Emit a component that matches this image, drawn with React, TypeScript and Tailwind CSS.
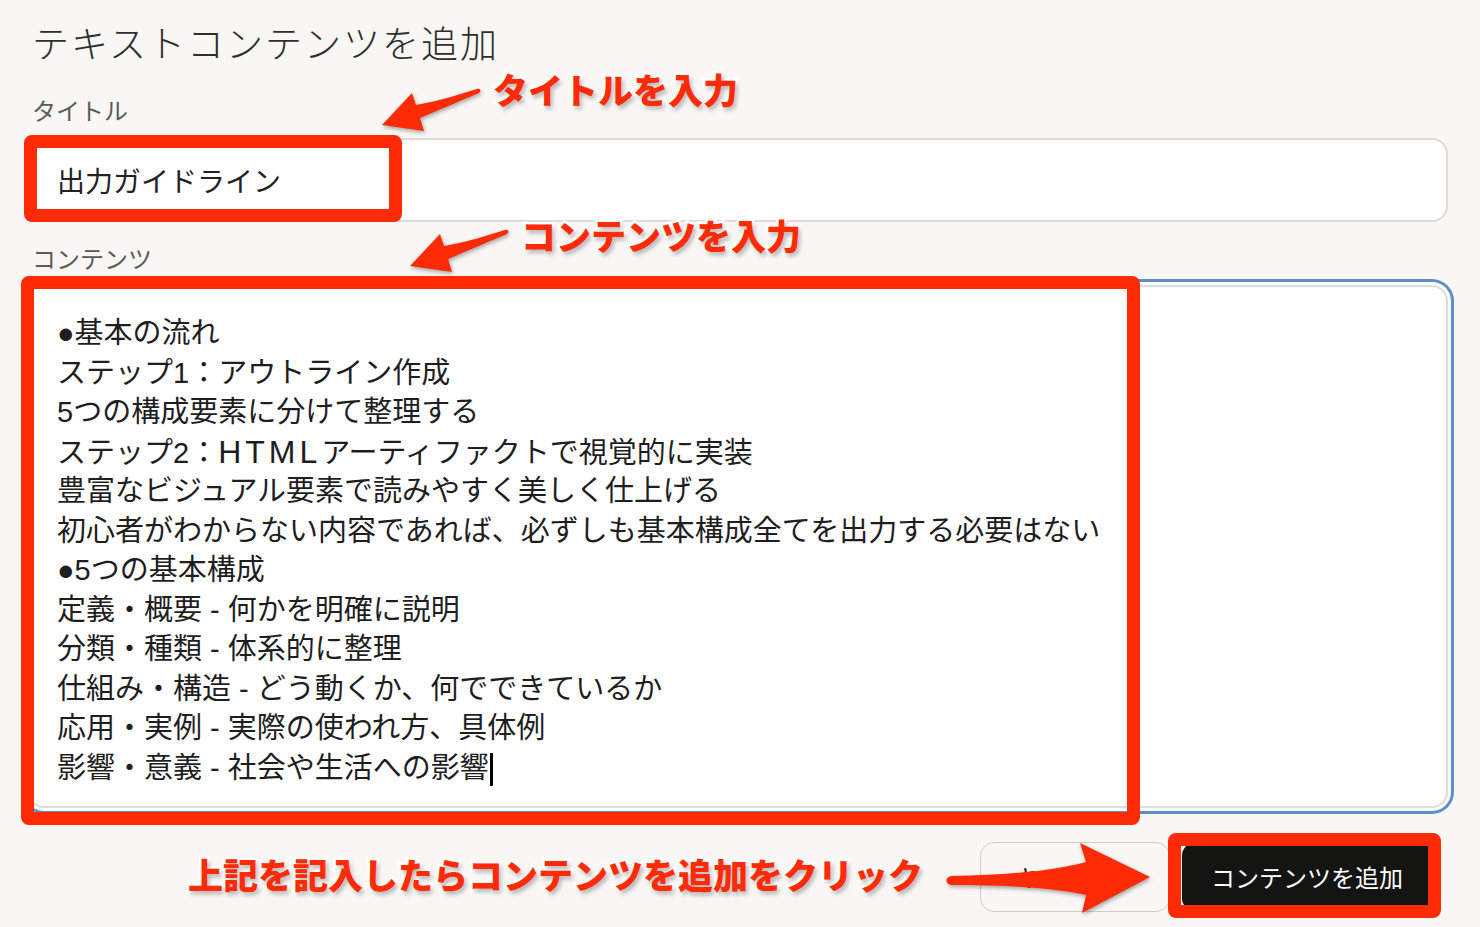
import React from 'react';

const contentLines: React.ReactNode[] = [
  '●基本の流れ',
  'ステップ1：アウトライン作成',
  '5つの構成要素に分けて整理する',
  <>
    ステップ2：<span className="text-[32px] tracking-[4px]">HTML</span>アーティファクトで視覚的に実装
  </>,
  '豊富なビジュアル要素で読みやすく美しく仕上げる',
  '初心者がわからない内容であれば、必ずしも基本構成全てを出力する必要はない',
  '●5つの基本構成',
  '定義・概要 - 何かを明確に説明',
  '分類・種類 - 体系的に整理',
  '仕組み・構造 - どう動くか、何でできているか',
  '応用・実例 - 実際の使われ方、具体例',
  '影響・意義 - 社会や生活への影響',
];

const noteText =
  "absolute whitespace-nowrap text-[35px] leading-none font-black text-[#ff2b06] [paint-order:stroke_fill] [-webkit-text-stroke:5px_white] [text-shadow:2px_3px_4px_rgba(0,0,0,0.3)]";

function Arrows() {
  return (
    <svg
      className="pointer-events-none absolute inset-0 h-[927px] w-[1480px] drop-shadow-[1px_2px_2px_rgba(0,0,0,0.35)]"
      viewBox="0 0 1480 927"
      fill="#ff2b06"
    >
      {/* title arrow */}
      <path d="M 477 89 C 460 94, 440 101, 416 105 L 412 93 L 382 125 L 424 131 L 420 118 C 444 108, 462 100, 479 93 C 482 91, 480 88, 477 89 Z" />
      {/* content arrow */}
      <path d="M 505 230 C 488 235, 468 242, 444 246 L 440 234 L 410 266 L 452 272 L 448 259 C 472 249, 490 241, 507 234 C 510 232, 508 229, 505 230 Z" />
      {/* button arrow */}
      <path d="M 951 876 C 1000 875, 1050 872, 1086 862 L 1080 843 L 1150 877 L 1082 913 L 1086 895 C 1050 887, 1000 885, 951 885 C 945 884, 945 877, 951 876 Z" />
    </svg>
  );
}

export default function App() {
  return (
    <div className="relative h-[927px] w-[1480px] overflow-hidden bg-[#f8f7f4] font-['Noto_Sans_CJK_JP',sans-serif]">
      <div className="pl-[28px] pr-[32px] pt-[16px]">
        <h2 className="pl-[4px] text-[37px] leading-[52px] font-light tracking-[2px] text-[#2e2e2e]">
          テキストコンテンツを追加
        </h2>

        <div className="mt-[26px] pl-[4px] text-[24px] leading-[32px] text-[#5a5a5a]">タイトル</div>
        <div className="mt-[12px] flex h-[84px] items-center rounded-[16px] border-2 border-[#dedcd8] bg-white pl-[27px] text-[28px] text-[#222]">
          出力ガイドライン
        </div>

        <div className="mt-[20px] pl-[4px] text-[24px] leading-[32px] text-[#5a5a5a]">コンテンツ</div>
        <div className="mt-[11px] h-[523px] rounded-[16px] border-2 border-[#dedcd8] bg-white pl-[27px] pt-[27px] font-['Liberation_Sans','Noto_Sans_CJK_JP',sans-serif] text-[29px] leading-[39.5px] text-[#1e1e1e] ring-[3px] ring-[#5d90c9] ring-offset-[3px] ring-offset-white">
          {contentLines.map((line, i) => (
            <div key={i} className="h-[39.5px] whitespace-nowrap">
              {line}
              {i === contentLines.length - 1 && (
                <span className="ml-[1px] inline-block h-[33px] w-[3px] bg-black align-middle" />
              )}
            </div>
          ))}
        </div>

        <div className="mt-[34px] flex justify-end gap-[12px] pr-[16px]">
          <button className="h-[70px] w-[190px] rounded-[14px] border-[1.5px] border-[#cfcdc9] text-[24px] text-[#222]">
            キャンセル
          </button>
          <button className="h-[70px] w-[250px] rounded-[14px] bg-[#141413] text-[24px] text-white">
            コンテンツを追加
          </button>
        </div>
      </div>

      {/* annotation boxes */}
      <div className="absolute left-[24px] top-[135px] h-[87px] w-[378px] rounded-[8px] border-[13px] border-[#ff2b06]" />
      <div className="absolute left-[21px] top-[276px] h-[549px] w-[1119px] rounded-[8px] border-[13px] border-[#ff2b06]" />
      <div className="absolute left-[1168px] top-[833px] h-[85px] w-[273px] rounded-[8px] border-[13px] border-[#ff2b06]" />

      <Arrows />

      <div className={`${noteText} left-[493px] top-[71px]`}>タイトルを入力</div>
      <div className={`${noteText} left-[521px] top-[217px]`}>コンテンツを入力</div>
      <div className={`${noteText} left-[188px] top-[856px]`}>上記を記入したらコンテンツを追加をクリック</div>
    </div>
  );
}
